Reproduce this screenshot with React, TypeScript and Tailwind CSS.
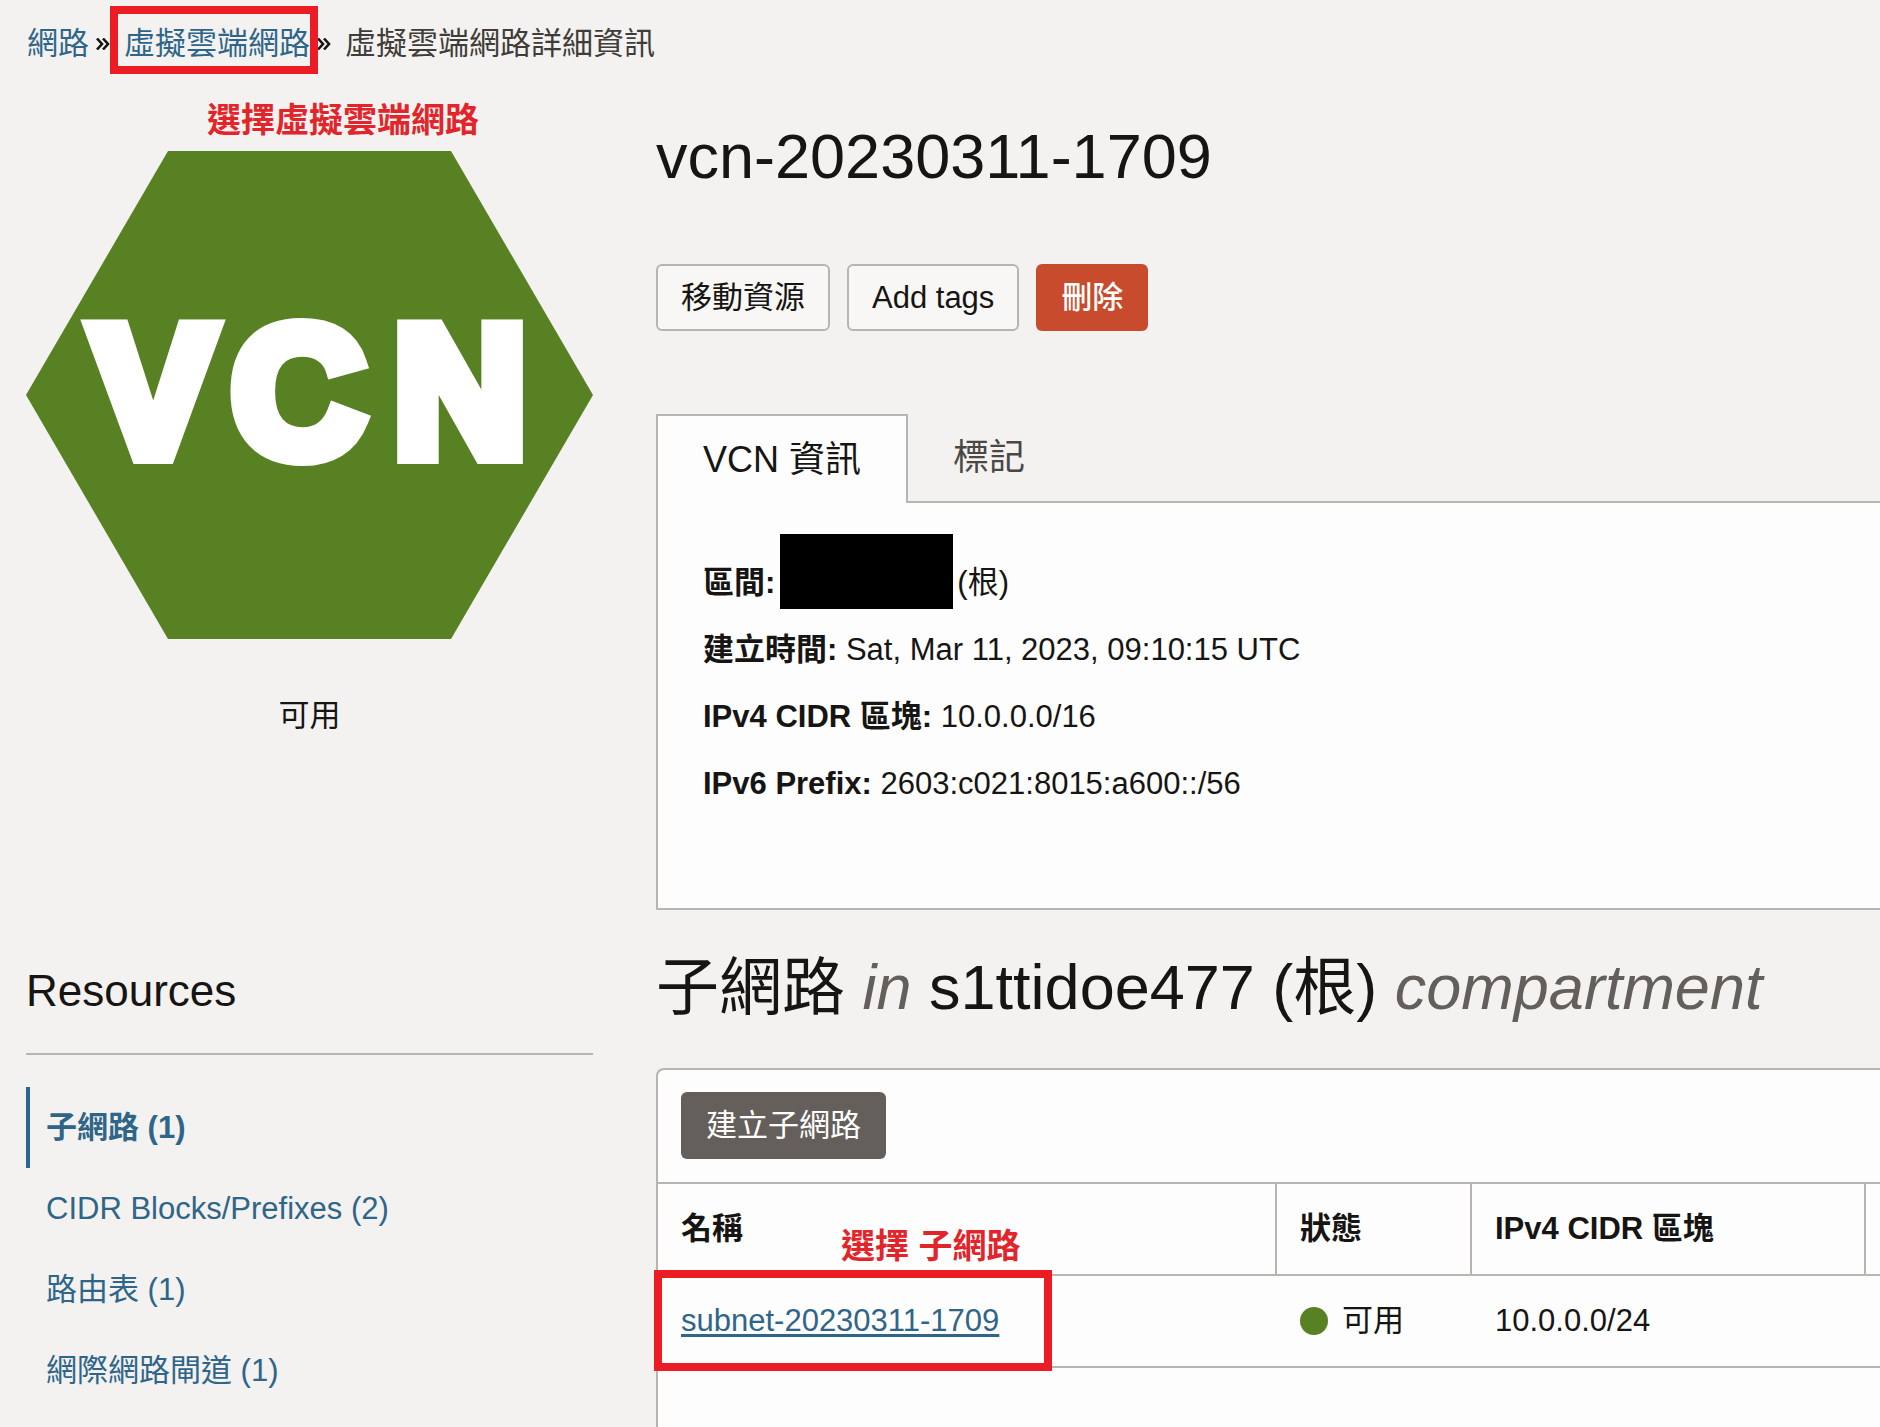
import React from 'react';

interface ResourceLink {
  label: string;
  count: number;
}

interface Subnet {
  name: string;
  status: string;
  cidr: string;
}

const resources: ResourceLink[] = [
  { label: '子網路', count: 1 },
  { label: 'CIDR Blocks/Prefixes', count: 2 },
  { label: '路由表', count: 1 },
  { label: '網際網路閘道', count: 1 },
];

const subnets: Subnet[] = [
  { name: 'subnet-20230311-1709', status: '可用', cidr: '10.0.0.0/24' },
];

function Separator() {
  return (
    <span className="flex w-[35px] items-center pl-[7px]">
      <svg viewBox="0 0 14 12" className="h-3 w-[14px]" fill="none" stroke="#161513" strokeWidth="2.6" aria-hidden="true">
        <path d="M1 0.5 L6 6 L1 11.5" />
        <path d="M7 0.5 L12 6 L7 11.5" />
      </svg>
    </span>
  );
}

function Breadcrumbs() {
  return (
    <nav aria-label="Breadcrumb" className="flex pt-5 pl-[27px] leading-[48px]">
      <a href="#networking" className="text-[#2f6589]">網路</a>
      <Separator />
      <a href="#vcns" className="relative text-[#2f6589]">
        虛擬雲端網路
        <span className="absolute -top-[14px] -right-2 -bottom-[6px] -left-[14px] border-8 border-[#ec1c24]" />
      </a>
      <Separator />
      <span className="text-[#3f3c39]">虛擬雲端網路詳細資訊</span>
    </nav>
  );
}

function Sidebar() {
  return (
    <aside className="relative w-[567px] shrink-0 pt-[83px]">
      <span className="absolute top-7 left-[181px] text-[34px] leading-[48px] font-bold text-[#e2252b]">
        選擇虛擬雲端網路
      </span>
      <svg viewBox="0 0 567 488" className="block w-full" role="img" aria-label="VCN">
        <polygon points="0,244 142,0 425,0 567,244 425,488 142,488" fill="#578123" />
        <text
          x="127 272 434"
          y="304"
          textAnchor="middle"
          fill="#ffffff"
          stroke="#ffffff"
          strokeWidth="18"
          className="font-['Liberation_Sans',sans-serif] text-[183px] font-bold"
        >
          VCN
        </text>
      </svg>
      <p className="mt-[57px] text-center leading-10">可用</p>

      {/* Resource navigation */}
      <h2 className="mt-[227px] border-b-2 border-[#b8b5b0] pb-[34px] text-[44px] leading-[56px]">Resources</h2>
      <ul className="mt-8">
        {resources.map((item, index) => (
          <li key={item.label}>
            <a
              href="#resources"
              className={`flex h-[81px] items-center border-l-4 pl-4 text-[#2f6589] ${
                index === 0 ? 'border-[#2f6589] font-bold' : 'border-transparent'
              }`}
            >
              {item.label} ({item.count})
            </a>
          </li>
        ))}
      </ul>
    </aside>
  );
}

function InfoPanel() {
  return (
    <section className="mt-[83px]">
      <div role="tablist" className="flex">
        <button
          role="tab"
          aria-selected="true"
          className="relative -mb-[2px] h-[89px] border-2 border-b-0 border-[#b8b5b0] bg-[#fdfdfd] px-[45px] text-4xl"
        >
          VCN 資訊
        </button>
        <button role="tab" aria-selected="false" className="h-[87px] px-[45px] text-4xl text-[#4a4744]">
          標記
        </button>
      </div>
      <div role="tabpanel" className="border-2 border-r-0 border-[#b8b5b0] bg-[#fdfdfd] px-[45px] pt-[46px] pb-[91px] leading-[67px]">
        <p className="flex">
          <strong>區間:</strong>
          <span className="relative mr-1 ml-[5px] w-[173px]">
            <span className="absolute inset-x-0 -top-[15px] h-[75px] bg-black" />
          </span>
          (根)
        </p>
        <p><strong>建立時間:</strong> Sat, Mar 11, 2023, 09:10:15 UTC</p>
        <p><strong>IPv4 CIDR 區塊:</strong> 10.0.0.0/16</p>
        <p><strong>IPv6 Prefix:</strong> 2603:c021:8015:a600::/56</p>
      </div>
    </section>
  );
}

function SubnetTable() {
  return (
    <section className="mt-[41px] grow rounded-tl-lg border-t-2 border-l-2 border-[#b8b5b0] bg-[#fdfdfd]">
      <div className="border-b-2 border-[#b8b5b0] px-[23px] pt-[22px] pb-[23px]">
        <button className="block h-[67px] rounded-md bg-[#655f5b] px-[25px] text-white">建立子網路</button>
      </div>
      <table className="w-full table-fixed border-separate border-spacing-0 text-left">
        <colgroup>
          <col className="w-[619px]" />
          <col className="w-[195px]" />
          <col className="w-[394px]" />
          <col />
        </colgroup>
        <thead>
          <tr className="h-[92px]">
            <th className="relative border-r-2 border-b-2 border-[#b8b5b0] px-[23px]">
              名稱
              <span className="absolute top-[38px] left-[183px] text-[34px] leading-[48px] text-[#e2252b]">
                選擇 子網路
              </span>
            </th>
            <th className="border-r-2 border-b-2 border-[#b8b5b0] px-[23px]">狀態</th>
            <th className="border-r-2 border-b-2 border-[#b8b5b0] px-[23px]">IPv4 CIDR 區塊</th>
            <th className="border-b-2 border-[#b8b5b0]" />
          </tr>
        </thead>
        <tbody>
          {subnets.map((subnet) => (
            <tr key={subnet.name} className="h-[92px]">
              <td className="relative border-b-2 border-[#b8b5b0] px-[23px]">
                <a href="#subnet" className="text-[#2f6589] underline decoration-3 underline-offset-3">
                  {subnet.name}
                </a>
                <span className="pointer-events-none absolute -top-[6px] -left-1 h-[101px] w-[398px] border-8 border-[#ec1c24]" />
              </td>
              <td className="border-b-2 border-[#b8b5b0] px-[23px]">
                <span className="flex items-center gap-[14px]">
                  <span className="size-7 rounded-full bg-[#578123]" />
                  {subnet.status}
                </span>
              </td>
              <td className="border-b-2 border-[#b8b5b0] px-[23px]">{subnet.cidr}</td>
              <td className="border-b-2 border-[#b8b5b0]" />
            </tr>
          ))}
        </tbody>
      </table>
    </section>
  );
}

export default function App() {
  return (
    <div
      lang="zh-Hant"
      className="flex min-h-screen flex-col overflow-hidden bg-[#f3f2f0] font-['Liberation_Sans','Noto_Sans_CJK_TC',sans-serif] text-[31px] leading-10 text-[#161513]"
    >
      <Breadcrumbs />
      <div className="flex grow gap-[63px] pl-[26px]">
        <Sidebar />
        <main className="flex min-w-0 grow flex-col pt-[52px]">
          <h1 className="text-[63px] leading-[72px]">vcn-20230311-1709</h1>

          {/* Actions */}
          <div className="mt-[72px] flex gap-[17px]">
            <button className="h-[67px] rounded-md border-2 border-[#b8b5b0] bg-[#f8f7f5] px-[23px]">移動資源</button>
            <button className="h-[67px] rounded-md border-2 border-[#b8b5b0] bg-[#f8f7f5] px-[23px]">Add tags</button>
            <button className="h-[67px] rounded-md bg-[#c74b2c] px-[25px] font-medium text-white">刪除</button>
          </div>

          <InfoPanel />

          <h2 className="mt-[37px] text-[63px] leading-[80px]">
            子網路 <em className="text-[#655f5b]">in</em> s1ttidoe477 (根){' '}
            <em className="text-[#655f5b]">compartment</em>
          </h2>
          <SubnetTable />
        </main>
      </div>
    </div>
  );
}
